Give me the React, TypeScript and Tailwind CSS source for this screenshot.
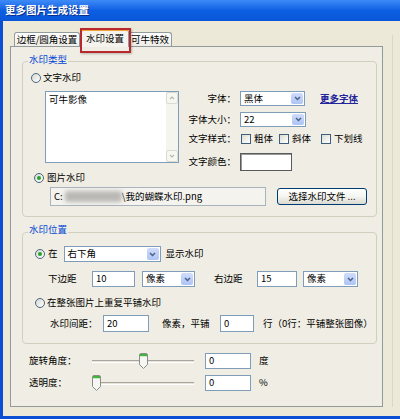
import React from 'react';

const Radio: React.FC<{ checked?: boolean }> = ({ checked }) => (
  <span className="w-[10px] h-[10px] shrink-0 rounded-full border border-[#4b6680] bg-gradient-to-br from-[#d8d8d0] to-white flex items-center justify-center">
    {checked && <span className="w-[4px] h-[4px] rounded-full bg-[#27a327]" />}
  </span>
);

const Check: React.FC = () => (
  <span className="block w-[10px] h-[10px] shrink-0 border border-[#3e5e7e] bg-gradient-to-br from-[#dcdcd4] to-white" />
);

const Chevron = () => (
  <svg width="7" height="5" viewBox="0 0 7 5">
    <path d="M1 1 L3.5 3.5 L6 1" fill="none" stroke="#4d6185" strokeWidth="1.5" />
  </svg>
);

const Combo: React.FC<{ value: string; className: string }> = ({ value, className }) => (
  <div className={`flex bg-white border border-[#7f9db9] ${className}`}>
    <span className="flex-1 pl-[3px] flex items-center leading-none">{value}</span>
    <span className="w-[12px] m-px rounded-[2px] bg-gradient-to-b from-[#cfdcfc] to-[#aec4f4] flex items-center justify-center">
      <Chevron />
    </span>
  </div>
);

const TextBox: React.FC<{ value: string; className: string }> = ({ value, className }) => (
  <div className={`bg-white border border-[#7f9db9] pl-[3px] flex items-center leading-none ${className}`}>{value}</div>
);

const Thumb = () => (
  <svg width="9" height="16" viewBox="0 0 9 16">
    <path d="M0.5 2 Q0.5 0.5 2 0.5 H7 Q8.5 0.5 8.5 2 V11.5 L4.5 15.5 L0.5 11.5 Z" fill="#f6f6f2" stroke="#8c8c86" />
    <path d="M1 1 H8 V3.2 H1 Z" fill="#3fb43f" />
  </svg>
);

const Slider: React.FC<{ left: number }> = ({ left }) => (
  <div className="relative w-[102px] h-[16px]">
    <div className="mt-[7px] h-[3px] border-t border-[#a7a59e] border-b border-b-white bg-[#e6e4da]" />
    <div className="absolute top-0" style={{ left }}>
      <Thumb />
    </div>
  </div>
);

const App: React.FC = () => {
  return (
    <div
      className="w-[400px] h-[419px] overflow-hidden bg-[#0a4fd4] flex flex-col text-[9.5px] text-black"
      style={{ fontFamily: '"Noto Sans CJK SC", "Noto Sans", sans-serif' }}
    >
      {/* title bar */}
      <div className="h-[21px] shrink-0 bg-gradient-to-b from-[#3d8af7] via-[#0c5fe2] to-[#0a56d8] flex items-center pl-[5px]">
        <span className="text-white font-bold text-[10.5px] leading-none [text-shadow:1px_1px_0_#0a2f8a]">更多图片生成设置</span>
      </div>

      {/* body */}
      <div className="h-[395px] ml-[3px] bg-[#ece9d8] flex pl-[7px]">
        <div className="w-[373px] flex flex-col">
          {/* tabs */}
          <div className="mt-[8px] h-[18px] flex items-end pl-[4px]">
            <div className="w-[66px] h-[15px] border border-b-0 border-[#919b9c] rounded-t-[3px] bg-gradient-to-b from-white to-[#ecebe5] flex items-center justify-center leading-none">
              边框/圆角设置
            </div>
            <div className="relative z-10 ml-px w-[48px] h-[18px] border border-b-0 border-[#919b9c] rounded-t-[3px] bg-[#f4f3ee] border-t-2 border-t-[#f2a33a] flex items-center justify-center leading-none">
              水印设置
              <div className="absolute -left-[2px] -top-[3px] w-[51px] h-[25px] border-2 border-[#b8282c] shadow-[1px_1px_2px_rgba(0,0,0,0.25)]" />
            </div>
            <div className="w-[43px] h-[15px] border border-b-0 border-l-0 border-[#919b9c] rounded-tr-[3px] bg-gradient-to-b from-white to-[#ecebe5] flex items-center justify-center leading-none">
              可牛特效
            </div>
          </div>

          {/* panel */}
          <div className="-mt-px h-[361px] border border-[#919b9c] bg-[#f0eee4] flex flex-col">
            {/* 水印类型 */}
            <div className="ml-[11px] mt-[14px] w-[355px] h-[156px] border border-[#d0d0bf] rounded-[4px] flex flex-col">
              <div className="-mt-[9px] ml-[5px] px-[1px] w-fit h-[14px] bg-[#f0eee4] text-[#0046d5] flex items-center leading-none">
                水印类型
              </div>
              <div className="flex items-start">
                <div className="w-[162px] flex flex-col">
                  <div className="mt-[5px] h-[12px] pl-[8px] flex items-center gap-[2px] leading-none">
                    <Radio />
                    <span>文字水印</span>
                  </div>
                  <div className="mt-[7px] ml-[22px] w-[134px] h-[72px] bg-white border border-[#7f9db9] flex">
                    <div className="flex-1 pl-[3px] pt-[3px] leading-none">可牛影像</div>
                    <div className="w-[12px] bg-[#f5f5f0] flex flex-col justify-between">
                      <div className="h-[12px] border border-[#dcdbd2] rounded-[2px] bg-[#f7f7f2] flex items-center justify-center">
                        <svg width="6" height="4" viewBox="0 0 6 4"><path d="M1 3 L3 1 L5 3" fill="none" stroke="#b8b7ae" strokeWidth="1.2" /></svg>
                      </div>
                      <div className="h-[12px] border border-[#dcdbd2] rounded-[2px] bg-[#f7f7f2] flex items-center justify-center">
                        <svg width="6" height="4" viewBox="0 0 6 4"><path d="M1 1 L3 3 L5 1" fill="none" stroke="#b8b7ae" strokeWidth="1.2" /></svg>
                      </div>
                    </div>
                  </div>
                </div>
                <div className="pt-[24px] flex flex-col">
                  <div className="h-[15px] flex items-center leading-none">
                    <span className="w-[51px] text-right">字体：</span>
                    <Combo value="黑体" className="ml-[4px] w-[65px] h-[15px]" />
                    <span className="ml-[15px] text-[#23239a] font-bold underline">更多字体</span>
                  </div>
                  <div className="mt-[6px] h-[15px] flex items-center leading-none">
                    <span className="w-[51px] text-right">字体大小：</span>
                    <Combo value="22" className="ml-[4px] w-[66px] h-[15px]" />
                  </div>
                  <div className="mt-[5px] h-[14px] flex items-center leading-none">
                    <span className="w-[51px] text-right">文字样式：</span>
                    <span className="ml-[5px]"><Check /></span>
                    <span className="ml-[3px]">粗体</span>
                    <span className="ml-[6px]"><Check /></span>
                    <span className="ml-[3px]">斜体</span>
                    <span className="ml-[10px]"><Check /></span>
                    <span className="ml-[3px]">下划线</span>
                  </div>
                  <div className="mt-[7px] h-[18px] flex items-center leading-none">
                    <span className="w-[51px] text-right">文字颜色：</span>
                    <div className="ml-[4px] w-[52px] h-[18px] bg-white border border-[#5a5a5a] shadow-[inset_1px_1px_0_#9a9a9a]" />
                  </div>
                </div>
              </div>
              <div className="mt-[1px] h-[12px] pl-[11px] flex items-center gap-[3px] leading-none">
                <Radio checked />
                <span>图片水印</span>
              </div>
              <div className="mt-[3px] h-[19px] pl-[27px] flex items-center">
                <div className="w-[216px] h-[19px] bg-[#f4f3ee] border border-[#a9b3bf] pl-[3px] flex items-center leading-none">
                  <span>C:</span>
                  <span className="ml-[2px] w-[57px] h-[11px] rounded-[3px] bg-[#b9b8b4] blur-[2px]" />
                  <span>\我的蝴蝶水印.png</span>
                </div>
                <div className="ml-[11px] w-[90px] h-[17px] rounded-[3px] border border-[#003c74] bg-gradient-to-b from-white via-[#f4f4f0] to-[#dcdad0] flex items-center justify-center leading-none">
                  选择水印文件 ...
                </div>
              </div>
            </div>

            {/* 水印位置 */}
            <div className="ml-[11px] mt-[15px] w-[355px] h-[112px] border border-[#d0d0bf] rounded-[4px] flex flex-col">
              <div className="-mt-[10px] ml-[5px] px-[1px] w-fit h-[14px] bg-[#f0eee4] text-[#0046d5] flex items-center leading-none">
                水印位置
              </div>
              <div className="mt-[9px] h-[16px] pl-[12px] flex items-center leading-none">
                <Radio checked />
                <span className="ml-[3px]">在</span>
                <Combo value="右下角" className="ml-[6px] w-[97px] h-[16px]" />
                <span className="ml-[5px]">显示水印</span>
              </div>
              <div className="mt-[9px] h-[16px] pl-[25px] flex items-center leading-none">
                <span className="w-[44px]">下边距</span>
                <TextBox value="10" className="w-[43px] h-[16px]" />
                <Combo value="像素" className="ml-[7px] w-[53px] h-[16px]" />
                <span className="ml-[19px] w-[43px]">右边距</span>
                <TextBox value="15" className="w-[40px] h-[16px]" />
                <Combo value="像素" className="ml-[6px] w-[55px] h-[16px]" />
              </div>
              <div className="mt-[10px] h-[12px] pl-[12px] flex items-center leading-none">
                <Radio />
                <span className="ml-[2px]">在整张图片上重复平铺水印</span>
              </div>
              <div className="mt-[6px] h-[17px] pl-[27px] flex items-center leading-none">
                <span className="w-[53px]">水印间距：</span>
                <TextBox value="20" className="w-[46px] h-[17px]" />
                <span className="ml-[13px] w-[58px]">像素，平铺</span>
                <TextBox value="0" className="w-[34px] h-[17px]" />
                <span className="ml-[9px]">行（0行：平铺整张图像）</span>
              </div>
            </div>

            {/* sliders */}
            <div className="mt-[8px] h-[17px] pl-[18px] flex items-center leading-none">
              <span className="w-[63px]">旋转角度：</span>
              <Slider left={47} />
              <TextBox value="0" className="ml-[11px] w-[46px] h-[16px]" />
              <span className="ml-[8px]">度</span>
            </div>
            <div className="mt-[6px] h-[16px] pl-[18px] flex items-center leading-none">
              <span className="w-[63px]">透明度：</span>
              <Slider left={0} />
              <TextBox value="0" className="ml-[11px] w-[46px] h-[16px]" />
              <span className="ml-[8px]">%</span>
            </div>
          </div>
        </div>
        <div className="ml-[9px] mt-[14px] w-px h-[372px] bg-[#dad7c6]" />
      </div>
    </div>
  );
};

export default App;
